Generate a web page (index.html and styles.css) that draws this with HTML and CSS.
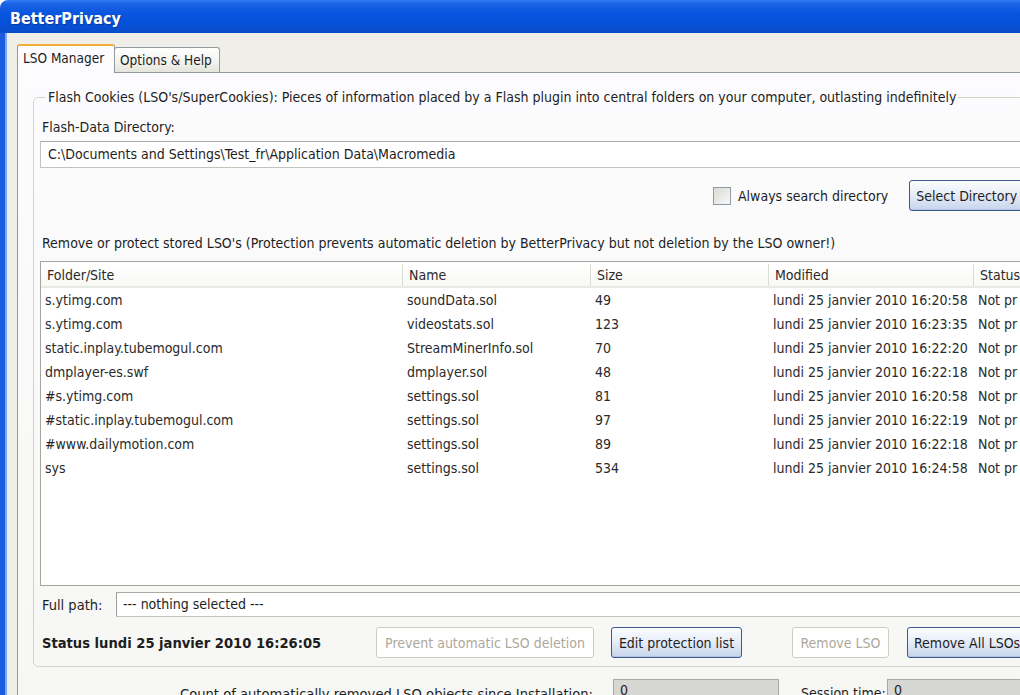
FILE: index.html
```html
<!DOCTYPE html>
<html>
<head>
<meta charset="utf-8">
<link rel="stylesheet" href="styles.css">
</head>
<body>
<div class="window">
  <div class="titlebar"><span class="title">BetterPrivacy</span></div>
  <div class="client">
    <div class="tabs">
      <div class="tab active">LSO Manager</div>
      <div class="tab">Options &amp; Help</div>
    </div>
    <div class="panel">
      <fieldset class="group">
        <legend>Flash Cookies (LSO's/SuperCookies): Pieces of information placed by a Flash plugin into central folders on your computer, outlasting indefinitely</legend>
        <div class="label dir-label">Flash-Data Directory:</div>
        <div class="textbox dir-box">C:\Documents and Settings\Test_fr\Application Data\Macromedia</div>
        <div class="dir-row">
          <span class="checkbox"></span>
          <span class="check-label">Always search directory</span>
          <button class="btn sel-dir">Select Directory</button>
        </div>
        <div class="label list-label">Remove or protect stored LSO's (Protection prevents automatic deletion by BetterPrivacy but not deletion by the LSO owner!)</div>
        <div class="list">
          <div class="row head">
            <div class="c1">Folder/Site</div><div class="c2">Name</div><div class="c3">Size</div><div class="c4">Modified</div><div class="c5">Status</div>
          </div>
          <div class="row"><div class="c1">s.ytimg.com</div><div class="c2">soundData.sol</div><div class="c3">49</div><div class="c4">lundi 25 janvier 2010 16:20:58</div><div class="c5">Not pr</div></div>
          <div class="row"><div class="c1">s.ytimg.com</div><div class="c2">videostats.sol</div><div class="c3">123</div><div class="c4">lundi 25 janvier 2010 16:23:35</div><div class="c5">Not pr</div></div>
          <div class="row"><div class="c1">static.inplay.tubemogul.com</div><div class="c2">StreamMinerInfo.sol</div><div class="c3">70</div><div class="c4">lundi 25 janvier 2010 16:22:20</div><div class="c5">Not pr</div></div>
          <div class="row"><div class="c1">dmplayer-es.swf</div><div class="c2">dmplayer.sol</div><div class="c3">48</div><div class="c4">lundi 25 janvier 2010 16:22:18</div><div class="c5">Not pr</div></div>
          <div class="row"><div class="c1">#s.ytimg.com</div><div class="c2">settings.sol</div><div class="c3">81</div><div class="c4">lundi 25 janvier 2010 16:20:58</div><div class="c5">Not pr</div></div>
          <div class="row"><div class="c1">#static.inplay.tubemogul.com</div><div class="c2">settings.sol</div><div class="c3">97</div><div class="c4">lundi 25 janvier 2010 16:22:19</div><div class="c5">Not pr</div></div>
          <div class="row"><div class="c1">#www.dailymotion.com</div><div class="c2">settings.sol</div><div class="c3">89</div><div class="c4">lundi 25 janvier 2010 16:22:18</div><div class="c5">Not pr</div></div>
          <div class="row"><div class="c1">sys</div><div class="c2">settings.sol</div><div class="c3">534</div><div class="c4">lundi 25 janvier 2010 16:24:58</div><div class="c5">Not pr</div></div>
        </div>
        <div class="path-row">
          <span class="path-label">Full path:</span>
          <div class="textbox path-box">--- nothing selected ---</div>
        </div>
        <div class="status-row">
          <span class="status">Status lundi 25 janvier 2010 16:26:05</span>
          <button class="btn disabled prevent">Prevent automatic LSO deletion</button>
          <button class="btn edit">Edit protection list</button>
          <button class="btn disabled remove">Remove LSO</button>
          <button class="btn remove-all">Remove All LSOs</button>
        </div>
      </fieldset>
      <div class="count-row">
        <span class="count-label">Count of automatically removed LSO objects since Installation:</span>
        <div class="countbox">0</div>
        <span class="session-label">Session time:</span>
        <div class="countbox second">0</div>
      </div>
    </div>
  </div>
</div>
</body>
</html>
```

FILE: styles.css
```css
html, body {
  margin: 0;
  padding: 0;
}
body {
  width: 1020px;
  height: 695px;
  overflow: hidden;
  background: #ffffff;
  font-family: "DejaVu Sans Condensed", "DejaVu Sans", sans-serif;
  font-size: 14px;
  color: #1e1e1e;
}
.window {
  width: 1160px;
  height: 760px;
  display: flex;
  flex-direction: column;
}
.titlebar {
  height: 33px;
  box-sizing: border-box;
  flex: none;
  border-radius: 8px 8px 0 0;
  background: linear-gradient(#2f7cf2 0%, #1a63e6 12%, #0a55df 40%, #0550d8 70%, #0a4cc9 100%);
  display: flex;
  align-items: center;
  padding: 4px 0 0 10px;
}
.title {
  color: #ffffff;
  font-family: "DejaVu Sans Condensed", "DejaVu Sans", sans-serif;
  font-weight: bold;
  font-size: 16px;
  text-shadow: 1px 1px 0 #0b3a9a;
}
.client {
  flex: 1;
  border-left: 5px solid #1b5ce0;
  box-shadow: inset 2px 0 0 #7fa6ee;
  background: #efeee9;
  padding: 10px 0 0 12px;
  display: flex;
  flex-direction: column;
}
.tabs {
  display: flex;
  align-items: flex-end;
  height: 29px;
  position: relative;
  z-index: 1;
}
.tab {
  height: 24px;
  line-height: 24px;
  padding: 0 5px;
  width: 94px;
  border: 1px solid #919b9c;
  border-bottom: none;
  border-radius: 3px 3px 0 0;
  background: linear-gradient(#ffffff, #f2f2ee 60%, #e4e4dc);
  color: #1e1e1e;
  box-sizing: content-box;
  white-space: nowrap;
  font-size: 13.5px;
}
.tab.active {
  width: 86px;
  border-top: 2px solid #f3ae3a;
  background: #fcfcfe;
  margin-bottom: -1px;
  padding-bottom: 1px;
  height: 26px;
  line-height: 25px;
}
.tab:not(.active) {
  margin-left: -1px;
}
.panel {
  flex: 1;
  border: 1px solid #919b9c;
  background: linear-gradient(#fcfcfe, #f6f6f3);
  padding: 14px 0 0 15px;
}
.group {
  margin: 0;
  border: 1px solid #d5d3c7;
  border-radius: 5px;
  padding: 0 0 8px 6px;
  width: 1100px;
  box-sizing: border-box;
}
.group legend {
  padding: 0 1px 0 2px;
  margin-left: 6px;
  line-height: 20px;
  white-space: nowrap;
}
.label {
  padding-left: 2px;
  line-height: 17px;
  white-space: nowrap;
}
.dir-label {
  margin-top: 12px;
}
.textbox {
  border: 1px solid #c3c3bd;
  border-top-color: #a9a9a3;
  background: #ffffff;
  box-sizing: border-box;
  white-space: nowrap;
}
.dir-box {
  margin-top: 5px;
  height: 27px;
  line-height: 25px;
  padding-left: 7px;
}
.dir-row {
  display: flex;
  align-items: center;
  height: 31px;
  margin-top: 12px;
  padding-left: 673px;
}
.checkbox {
  width: 16px;
  height: 16px;
  border: 1px solid #8f99a8;
  background: linear-gradient(135deg, #dcdcd6, #f7f7f4);
  flex: none;
}
.check-label {
  margin-left: 7px;
  margin-right: 21px;
  white-space: nowrap;
}
.btn {
  font-family: inherit;
  font-size: 14px;
  color: #1e1e1e;
  border: 1px solid #3a5a8c;
  border-radius: 3px;
  background: linear-gradient(#fbfcfe, #e8eef8 45%, #c6d4ec);
  box-shadow: inset 0 -1px 0 #b4c4e2;
  height: 31px;
  padding: 0 6px;
  white-space: nowrap;
  flex: none;
}
.btn.disabled {
  border-color: #cfcdc3;
  background: #ffffff;
  box-shadow: none;
  color: #aca99c;
}
.sel-dir {
  width: 130px;
  text-align: left;
}
.list-label {
  margin-top: 24px;
}
.list {
  margin-top: 9px;
  height: 325px;
  border: 1px solid #a5a5a0;
  background: #ffffff;
  box-sizing: border-box;
}
.row {
  display: flex;
  height: 24px;
  line-height: 24px;
  white-space: nowrap;
  color: #2a2a2a;
}
.row.head {
  height: 22px;
  line-height: 22px;
  margin-top: 2px;
  border-bottom: 2px solid #e9e9e3;
  background: linear-gradient(#ffffff, #f8f8f5);
}
.row > div {
  overflow: hidden;
  box-sizing: border-box;
}
.row .c1 { width: 362px; padding-left: 4px; }
.row .c2 { width: 188px; padding-left: 4px; }
.row .c3 { width: 178px; padding-left: 4px; }
.row .c4 { width: 205px; padding-left: 4px; }
.row .c5 { width: 150px; padding-left: 4px; }
.row.head .c1 { padding-left: 6px; }
.row.head .c2 { padding-left: 6px; }
.row.head .c3 { padding-left: 6px; }
.row.head .c4 { padding-left: 6px; }
.row.head .c5 { padding-left: 6px; }
.row.head .c1, .row.head .c2, .row.head .c3, .row.head .c4 {
  border-right: 1px solid #dcdcd5;
}
.path-row {
  display: flex;
  align-items: center;
  margin-top: 6px;
  height: 25px;
}
.path-label {
  padding-left: 2px;
  width: 74px;
  flex: none;
  font-size: 14.5px;
}
.path-box {
  flex: 1;
  height: 25px;
  line-height: 23px;
  padding-left: 6px;
  border-left-color: #9f9f99;
  border-right: none;
}
.status-row {
  display: flex;
  align-items: center;
  margin-top: 10px;
  height: 31px;
}
.status {
  font-weight: bold;
  font-size: 14.6px;
  padding-left: 2px;
  width: 334px;
  flex: none;
  white-space: nowrap;
}
.prevent { width: 218px; }
.edit { width: 131px; margin-left: 17px; }
.remove { width: 97px; margin-left: 50px; }
.remove-all { width: 140px; margin-left: 18px; text-align: left; }
.count-row {
  display: flex;
  align-items: flex-start;
  margin-top: 12px;
  height: 30px;
}
.count-label {
  width: 560px;
  text-align: right;
  padding-top: 6px;
  flex: none;
  white-space: nowrap;
  font-size: 14.6px;
}
.countbox {
  margin-left: 20px;
  width: 166px;
  height: 26px;
  background: #d6d6d2;
  border: 1px solid #a8a8a3;
  box-sizing: border-box;
  padding-left: 6px;
  line-height: 20px;
  flex: none;
}
.session-label {
  margin-left: 22px;
  padding-top: 6px;
  width: 66px;
  flex: none;
  white-space: nowrap;
}
.countbox.second {
  width: 200px;
}
```
